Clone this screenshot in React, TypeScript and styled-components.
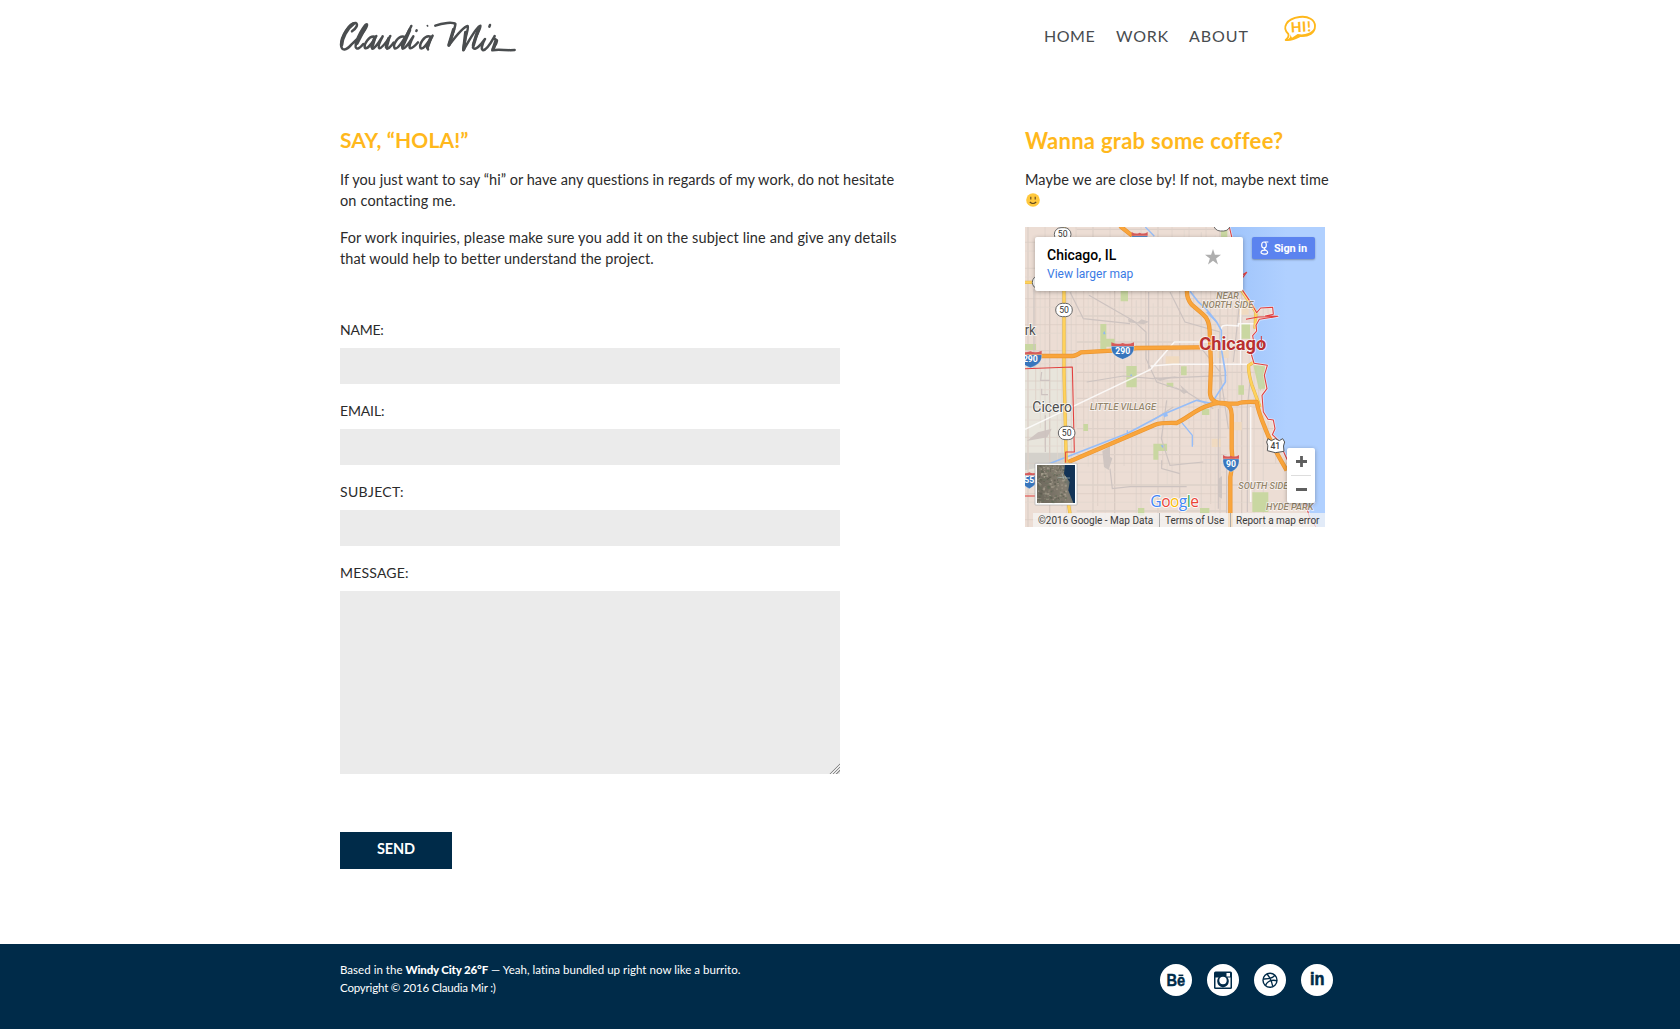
import React from "react";
import styled, { createGlobalStyle } from "styled-components";

const navy = "#002b49";
const amber = "#ffb81c";

const GlobalStyle = createGlobalStyle`
  * { box-sizing: border-box; }
  body { margin: 0; background: #fff; color: #2b2b2b; font-family: Lato, "Open Sans", sans-serif; }
  h2, p { margin: 0; }
`;

const Page = styled.div`
  display: flex;
  flex-direction: column;
  height: 1029px;
  overflow: hidden;
`;

const Container = styled.div`
  display: flex;
  justify-content: space-between;
  width: 1000px;
  margin: 0 auto;
`;

const Header = styled.header`
  height: 126px;
`;

const HeaderRow = styled(Container)`
  height: 70px;
`;

const Logo = styled.svg`
  display: block;
  width: 200px;
  height: 50px;
  margin: 10px 0 0 -10px;
  fill: none;
  stroke: #4a4d4f;
  stroke-linecap: round;
  stroke-linejoin: round;
`;

const Nav = styled.nav`
  display: flex;
  align-items: flex-start;
  padding-right: 22px;
`;

const NavLink = styled.a<{ $track: number; $width: number }>`
  width: ${(p) => p.$width}px;
  padding-top: 25px;
  font-size: 16px;
  line-height: 22px;
  letter-spacing: ${(p) => p.$track}px;
  color: #484c4f;
  text-decoration: none;
  white-space: nowrap;
`;

const HiBubble = styled.svg`
  width: 36px;
  height: 32px;
  margin: 13px 0 0 20px;
`;

const Main = styled(Container)`
  flex: 1;
  align-items: flex-start;
`;

const Column = styled.section<{ $width: number }>`
  display: flex;
  flex-direction: column;
  width: ${(p) => p.$width}px;
`;

const Heading = styled.h2<{ $track: number; $size: number }>`
  height: 27px;
  font-size: ${(p) => p.$size}px;
  line-height: ${(p) => (p.$size > 21 ? 29 : 27)}px;
  font-weight: 700;
  letter-spacing: ${(p) => p.$track}px;
  color: ${amber};
  white-space: nowrap;
`;

const Paragraph = styled.p`
  display: flex;
  flex-direction: column;
  margin-top: 16px;
  font-size: 14.5px;
  line-height: 21px;
`;

const Line = styled.span<{ $track: number }>`
  letter-spacing: ${(p) => p.$track}px;
  white-space: nowrap;
`;

const Smiley = styled.svg`
  width: 14px;
  height: 14px;
  margin: 3px 0 4px 1px;
`;

const Form = styled.form`
  display: flex;
  flex-direction: column;
  align-items: flex-start;
  margin-top: 51px;
`;

const Field = styled.label`
  display: flex;
  flex-direction: column;
  width: 500px;
  margin-bottom: 17px;
`;

const FieldName = styled.span<{ $track: number }>`
  height: 28px;
  font-size: 14px;
  line-height: 20px;
  letter-spacing: ${(p) => p.$track}px;
`;

const Input = styled.input`
  height: 36px;
  border: 0;
  padding: 0 10px;
  background: #ebebeb;
`;

const TextArea = styled.textarea`
  height: 183px;
  border: 0;
  padding: 10px;
  background: #ebebeb;
  resize: both;

  &::-webkit-resizer {
    background: linear-gradient(
      135deg,
      transparent 13.4px,
      #8a8a8a 13.7px,
      #8a8a8a 14.3px,
      transparent 14.7px,
      transparent 15.7px,
      #8a8a8a 16px,
      #8a8a8a 16.6px,
      transparent 17px,
      transparent 18px,
      #8a8a8a 18.3px,
      #8a8a8a 18.9px,
      transparent 19.3px
    );
  }
`;

const SendButton = styled.button`
  width: 112px;
  height: 37px;
  margin-top: 41px;
  padding: 0 0 3px;
  border: 0;
  background: ${navy};
  color: #fff;
  font: 700 14.5px/20px Lato, sans-serif;
  letter-spacing: -0.15px;
`;

const MapFrame = styled.div`
  position: relative;
  width: 300px;
  height: 300px;
  margin-top: 16px;
  overflow: hidden;
  font-family: Roboto, sans-serif;
`;

const MapCanvas = styled.svg`
  display: block;
  width: 300px;
  height: 300px;
`;

const PlaceCard = styled.div`
  position: absolute;
  left: 10px;
  top: 10px;
  display: flex;
  justify-content: space-between;
  width: 208px;
  height: 54px;
  padding: 9px 22px 0 12px;
  border-radius: 2px;
  background: #fff;
  box-shadow: 0 1px 4px rgba(0, 0, 0, 0.3);
`;

const PlaceText = styled.div`
  display: flex;
  flex-direction: column;
`;

const PlaceName = styled.span`
  font-size: 14px;
  line-height: 19px;
  font-weight: 500;
  color: #000;
`;

const PlaceLink = styled.a`
  font-size: 12px;
  line-height: 18px;
  color: #3a7ae4;
`;

const Star = styled.svg`
  width: 16px;
  height: 16px;
  margin-top: 3px;
  fill: #aeaeae;
`;

const SignIn = styled.div`
  position: absolute;
  right: 10px;
  top: 10px;
  display: flex;
  align-items: center;
  gap: 5px;
  width: 63px;
  height: 22px;
  padding-left: 8px;
  border-radius: 2px;
  background: #5b83ef;
  box-shadow: 0 1px 2px rgba(0, 0, 0, 0.3);
  color: #fff;
  font-size: 11px;
  font-weight: 700;
  letter-spacing: -0.15px;
  white-space: nowrap;
`;

const GoogleG = styled.svg`
  width: 9px;
  height: 14px;
  fill: none;
  stroke: #fff;
`;

const ZoomControl = styled.div`
  position: absolute;
  right: 10px;
  top: 221px;
  width: 28px;
  height: 55px;
  border-radius: 2px;
  background: #fff;
  box-shadow: 0 1px 4px rgba(0, 0, 0, 0.3);
`;

const Attribution = styled.div`
  position: absolute;
  right: 0;
  bottom: 0;
  display: flex;
  width: 292px;
  height: 14px;
  background: rgba(245, 245, 245, 0.72);
  color: #3a3a3a;
  font-size: 10px;
  line-height: 15px;
  white-space: nowrap;
`;

const Credit = styled.span<{ $width: number }>`
  width: ${(p) => p.$width}px;
  padding-left: 5px;
  & + & {
    border-left: 1px solid #aaa;
  }
`;

const Footer = styled.footer`
  height: 85px;
  background: ${navy};
  color: #fff;
`;

const FooterText = styled.div`
  display: flex;
  flex-direction: column;
  padding-top: 17px;
  font-size: 11.5px;
  line-height: 18px;
`;

const Bold = styled.b`
  font-weight: 900;
  letter-spacing: -0.15px;
`;

const Social = styled.div`
  display: flex;
  gap: 15px;
  padding: 20px 7px 0 0;
`;

const SocialIcon = styled.svg`
  width: 32px;
  height: 32px;
`;

const Signature = () => (
  <Logo viewBox="0 0 600 150" aria-label="Claudia Mir">
    <g strokeWidth="7.5">
      <path d="M66 64 C78 56 86 43 77 39 C58 37 33 80 33 104 C34 125 50 121 64 104 C84 86 114 54 111 43 C106 38 74 92 77 111 C80 122 92 112 100 102" />
      <path d="M134 80 C118 76 100 103 105 114 C113 120 129 94 139 78 C130 94 121 111 127 116 C136 116 150 91 158 79 C149 96 142 111 148 115 C158 114 171 93 181 78 C171 96 164 112 171 116 C181 114 186 103 191 98" />
      <path d="M222 80 C204 76 187 105 194 115 C204 120 230 77 244 48 C230 76 211 108 218 116 C228 116 241 93 250 79 C241 96 235 112 241 115 C250 114 258 104 264 97" />
      <path d="M302 80 C283 73 266 104 272 115 C281 121 297 92 308 77 C298 95 289 110 294 118" />
      <path d="M260 61 L259 63" />
      <path d="M292 47 L293 48" strokeWidth="5" />
      <path d="M316 47 C338 38 370 36 376 42 C377 51 365 77 356 107 C374 83 400 50 413 48 C418 55 402 86 400 121 C416 94 440 48 451 47 C456 53 428 89 429 113 C435 124 452 105 465 87 C456 103 452 119 459 121 C472 119 484 96 494 78 C488 90 500 86 501 92 C500 104 490 112 487 121 C503 117 530 122 554 120" />
      <path d="M480 45 L478 50" />
    </g>
    <g strokeWidth="10">
      <path d="M70 42 C50 56 36 84 35 105 M105 53 L81 100 M371 58 L357 104 M407 67 L401 118 M444 60 L430 106 M498 92 L489 118 M134 84 L126 111 M176 86 L169 111 M239 60 L218 108 M302 84 L292 112" />
    </g>
  </Logo>
);

const Bubble = () => (
  <HiBubble viewBox="0 0 108 96">
    <path
      d="M52 12 C79 8 99 21 99 39 C99 61 80 70 55 69 C42 76 28 84 11 81 C18 75 21 69 19 63 C-1 44 13 17 52 12Z"
      fill="#fff"
      stroke={amber}
      strokeWidth="5.5"
      strokeLinejoin="round"
    />
    <path d="M24 64 C27 73 22 77 12 82 C32 81 46 71 57 71 C76 71 94 62 98 46 C83 64 64 66 47 63 L30 74 Z" fill={amber} />
    <text x="26" y="57" fontFamily="Lato" fontSize="42" fontWeight="900" fill={amber} letterSpacing="2" transform="rotate(-3 50 45)">
      HI!
    </text>
  </HiBubble>
);

const shades = ["#ddd0c8", "#d9cbc3", "#e2d6ce"];
const gridX = Array.from({ length: 47 }, (_, i) => 24 + i * 16 + ((i * 7) % 9));
const gridY = Array.from({ length: 33 }, (_, i) => 22 + i * 28 + ((i * 11) % 13));
const noise = (n: number) => Math.abs(Math.sin(n * 127.1 + 3.7) * 43758.5453) % 1;

const Interstate = ({ x, y, label }: { x: number; y: number; label: string }) => {
  const half = label.length > 2 ? 34 : 24;
  return (
    <g transform={`translate(${x} ${y})`}>
      <path
        d={`M${-half} -12 H${half} C${half + 2} 10 ${half * 0.6} 20 0 27 C${-half * 0.6} 20 ${-half - 2} 10 ${-half} -12Z`}
        fill="#3876bd"
        stroke="#fff"
        strokeWidth="1"
      />
      <path d={`M${-half} -24 Q${-half / 2} -16 0 -22 Q${half / 2} -16 ${half} -24 V-13 H${-half}Z`} fill="#d65b5b" />
      <text y="11" textAnchor="middle" fontSize="26" fontWeight="700" fill="#fff">
        {label}
      </text>
    </g>
  );
};

const Route = ({ x, y, label }: { x: number; y: number; label: string }) => (
  <g>
    <rect x={x - 25} y={y - 20} width="50" height="40" rx="20" fill="#fff" stroke="#666" strokeWidth="3" />
    <text x={x} y={y + 9} textAnchor="middle" fontSize="26" fill="#333">
      {label}
    </text>
  </g>
);

const shore =
  "M628 15 L634 40 L655 130 L664 200 L690 238 L710 272 L722 258 L758 256 L760 277 L736 282 L774 283 L718 292 L708 310 L710 327 L698 341 L702 366 L692 390 L702 424 L742 430 L733 460 L741 500 L726 520 L730 570 L744 592 L760 594 L765 620 L757 638 L775 655 L802 714 L850 822 L868 884 L888 915";

const expressways =
  "M15 402 H157 Q166 402 183 391 L290 385 L350 378 L540 376 M300 12 L340 44 M501 205 Q499 229 515 248 L550 278 Q568 292 569 327 L573 430 L570 510 Q569 543 612 545 Q635 548 635 578 V680 L638 720 L631 765 V915 M145 720 L409 607 Q420 602 470 603 C500 590 530 560 565 551 Q590 538 625 545 H653 Q665 538 710 540 Q715 570 736 620 Q755 670 800 745";

const highways = "M132 15 V450 L138 690 L140 810 L150 875 M15 181 H50 M665 205 L708 270 L705 320 M703 420 L686 430 Q684 450 696 490 L720 555";

const ChicagoMap = () => (
  <MapCanvas viewBox="15 15 900 900" fontFamily="Roboto, sans-serif">
    <defs>
      <linearGradient id="lake" x1="0" x2="1">
        <stop offset="0" stopColor="#9fc4fb" />
        <stop offset="0.6" stopColor="#b0d0ff" />
      </linearGradient>
      <linearGradient id="sat" x1="0" x2="1" y1="0.3" y2="0">
        <stop offset="0" stopColor="#6f6a5e" />
        <stop offset="0.6" stopColor="#857e71" />
        <stop offset="0.8" stopColor="#5a6a69" />
        <stop offset="0.95" stopColor="#0d3260" />
      </linearGradient>
    </defs>
    <rect x="15" y="15" width="900" height="900" fill="#ecddd4" />
    <path d="M15 437 H158 L163 690 H137 L134 722 L15 780Z" fill="#e8e5dc" />
    <path d="M15 692 H134 V720 L15 745Z" fill="#d4d1cb" />
    {gridX.map((x, i) => (
      <path key={x} d={`M${x} ${i % 3 === 0 ? 15 : 15 + ((i * 83) % 240)} V${i % 4 === 0 ? 915 : 500 + ((i * 59) % 415)}`} stroke={shades[i % 3]} strokeWidth={i % 4 ? 2 : 4} />
    ))}
    {gridY.map((y, i) => (
      <path key={y} d={`M${i % 3 ? 15 : 170} ${y} H${i % 2 ? 860 : 620}`} stroke={shades[i % 3]} strokeWidth={i % 3 ? 2 : 4} />
    ))}
    <path
      d="M302 207 H324 V238 H302Z M241 306 H259 V350 H284 V374 H259 V381 H241Z M319 432 H350 V496 H319Z M483 433 H500 V460 H483Z M15 366 H48 V384 H15Z M190 606 H204 V627 H190Z M400 665 H441 V687 H415 V713 H400Z M655 490 H672 V518 H655Z M546 561 H568 V579 H546Z M697 811 H745 V870 H697Z M354 858 H373 V881 H354Z M540 858 H568 V874 H540Z M603 18 H622 V48 H603Z M440 482 H460 V495 H440Z M664 306 H690 V350 H664Z M700 430 H735 V500 H716Z"
      fill="#c9d7a1"
    />
    <path d="M250 332 L253 327 L257 337 H250Z M422 670 H434 L428 678Z M330 460 L334 456 L337 464Z" fill="#8db7f2" />
    <path d="M437 403 H478 V425 H437Z M593 381 H626 V408 H593Z M654 249 H686 V278 H654Z M640 600 H665 V625 H640Z M575 650 H602 V675 H575Z" fill="#f0dac0" />
    <path
      d="M324 290 L353 301 L365 292 L387 299 L371 307 L326 301Z M247 687 L270 673 V704 L277 709 L266 744 L252 735Z M400 466 L424 467 L475 462 L420 477Z M461 492 L489 507 L480 488 L504 509 L492 516Z M20 657 L54 631 L95 620 L82 646Z M594 772 L606 762 V830 L594 823Z"
      fill="#cfc5c1"
    />
    <g fill="none" stroke="#cdc3c0" strokeWidth="3.5">
      <path d="M150 210 L190 290 L330 305 M207 220 L340 296 L378 330 V410 L410 480 L500 510 L580 560 M450 210 L495 300 L600 330 V540 M200 480 L310 462 L400 470 L620 460 M270 740 L277 800 L330 794 H500 M440 535 L424 650 L450 730 L550 720 M690 480 L682 555 V870 M595 560 V860 M386 210 V440 M545 380 L600 450 L625 620 M660 230 L640 420 M42 200 V440 M76 580 V690 M620 720 V875 M425 715 V740 L480 755 M460 555 L390 600" />
      <path d="M65 450 L62 475 L90 475 M65 500 V518 H84" />
    </g>
    <path d="M15 622 L392 442 L463 360 H690 M392 432 L460 427 H694 M604 375 V318 Q606 308 624 310 L655 312 V305 H707 M662 230 V425 M692 555 V840" fill="none" stroke="#fff" strokeOpacity="0.8" strokeWidth="4.5" />
    <g fill="none" stroke="#96bdf8" strokeLinejoin="round">
      <path d="M510 208 L535 240 L558 260 L590 300 L604 325 V380 L616 450 V480 L590 520 L575 545 L530 535 L430 577 L323 634 L80 728" strokeWidth="5" />
      <path d="M376 15 L403 43 M480 595 L517 640 V674 M322 625 V640 M590 300 L560 270" strokeWidth="4" />
      <path d="M430 580 L442 576" strokeWidth="12" />
    </g>
    <path d={shore + " H915 V15Z"} fill="url(#lake)" />
    <path d="M709 433 L720 508 L730 490 L726 438Z" fill="#c7d8a9" />
    <g fill="none" strokeLinejoin="round">
      <path d={highways} stroke="#e2b54b" strokeWidth="10" />
      <path d={highways} stroke="#ffd25c" strokeWidth="7" />
      <path d={expressways} stroke="#eb9530" strokeWidth="13" />
      <path d={expressways} stroke="#f9a53c" strokeWidth="9" />
    </g>
    <g fill="none" stroke="#e2403f" strokeWidth="3.2" strokeLinejoin="round">
      <path d={shore} stroke="#fff" strokeOpacity="0.5" strokeWidth="8" />
      <path d={shore} />
      <path d="M668 158 L680 151 L668 167 M678 292 L715 285 L758 284 M15 440 L157 435 L163 690 H137 V722 M15 822 H52" />
    </g>
    <Route x={128} y={37} label="50" />
    <Route x={132} y={264} label="50" />
    <Route x={140} y={633} label="50" />
    <Route x={606} y={7} label="" />
    <Route x={62} y={181} label="" />
    <Interstate x={31} y={410} label="290" />
    <Interstate x={308} y={385} label="290" />
    <Interstate x={359} y={54} label="" />
    <Interstate x={28} y={773} label="55" />
    <Interstate x={633} y={723} label="90" />
    <path d="M744 650 L754 656 L766 650 L778 656 L788 650 L794 660 Q788 670 792 688 L766 692 L742 686 Q746 670 740 660Z" fill="#fff" stroke="#555" strokeWidth="3" />
    <text x="766" y="680" fontSize="26" fontWeight="500" textAnchor="middle" fill="#444">
      41
    </text>
    <g fill="#4e4e4e" stroke="#fff" strokeOpacity="0.8" strokeWidth="5" paintOrder="stroke" fontSize="42">
      <text x="14" y="338" textLength="33" lengthAdjust="spacingAndGlyphs">
        rk
      </text>
      <text x="37" y="570" textLength="119" lengthAdjust="spacingAndGlyphs">
        Cicero
      </text>
    </g>
    <g fill="#94856b" stroke="#fff" strokeOpacity="0.7" strokeWidth="4" paintOrder="stroke" fontSize="28" fontStyle="italic" fontWeight="500">
      <text x="589" y="230" textLength="67" lengthAdjust="spacingAndGlyphs">
        NEAR
      </text>
      <text x="546" y="257" textLength="154" lengthAdjust="spacingAndGlyphs">
        NORTH SIDE
      </text>
      <text x="210" y="563" textLength="198" lengthAdjust="spacingAndGlyphs">
        LITTLE VILLAGE
      </text>
      <text x="655" y="800" textLength="150" lengthAdjust="spacingAndGlyphs">
        SOUTH SIDE
      </text>
      <text x="738" y="864" textLength="142" lengthAdjust="spacingAndGlyphs">
        HYDE PARK
      </text>
    </g>
    <text x="538" y="384" textLength="201" lengthAdjust="spacingAndGlyphs" fontSize="56" fontWeight="700" fill="#b93030" stroke="#fff" strokeOpacity="0.7" strokeWidth="5" paintOrder="stroke">
      Chicago
    </text>
    <path d="M724 342 V374" stroke="#d63c3c" strokeWidth="3" />
    <rect x="45" y="724" width="126" height="125" rx="2" fill="#fff" stroke="#aaa" strokeWidth="2" />
    <rect x="51" y="729" width="114" height="114" fill="url(#sat)" />
    {Array.from({ length: 260 }, (_, i) => (
      <rect
        key={i}
        x={51 + noise(i) * 86}
        y={729 + noise(i + 400) * 110}
        width={2 + noise(i + 800) * 6}
        height={2 + noise(i + 1200) * 4}
        fill={["#b0a898", "#55564a", "#8a8375", "#66705c"][i % 4]}
        fillOpacity="0.6"
      />
    ))}
    <path d="M135 729 H165 V843 H160 L145 805 L149 780 L132 755Z" fill="#123356" />
    <path d="M112 768 L138 764 M126 755 L132 772 M134 768 L150 768" stroke="#aebbb5" strokeOpacity="0.7" strokeWidth="3" />
    <text x="391" y="854" textLength="146" fontFamily="'Open Sans'" fontSize="47" fontWeight="500" stroke="#fff" strokeWidth="5" paintOrder="stroke">
      <tspan fill="#4285f4">G</tspan>
      <tspan fill="#ea4335">o</tspan>
      <tspan fill="#fbbc05">o</tspan>
      <tspan fill="#4285f4">g</tspan>
      <tspan fill="#34a853">l</tspan>
      <tspan fill="#ea4335">e</tspan>
    </text>
  </MapCanvas>
);

const MapWidget = () => (
  <MapFrame>
    <ChicagoMap />
    <PlaceCard>
      <PlaceText>
        <PlaceName>Chicago, IL</PlaceName>
        <PlaceLink>View larger map</PlaceLink>
      </PlaceText>
      <Star viewBox="0 0 16 16">
        <path d="M8 0 L9.9 5.8 H16 L11.1 9.4 L13 15.4 L8 11.7 L3 15.4 L4.9 9.4 L0 5.8 H6.1Z" />
      </Star>
    </PlaceCard>
    <SignIn>
      <GoogleG viewBox="0 0 27 42">
        <ellipse cx="12" cy="12" rx="7" ry="9" strokeWidth="3.5" />
        <path d="M14 3 H25 M15 20 C6 27 24 26 23 34 C22 42 2 41 3 33 C4 28 12 27 17 28" strokeWidth="3.5" />
      </GoogleG>
      Sign in
    </SignIn>
    <ZoomControl>
      <svg width="28" height="55" viewBox="0 0 28 55">
        <path d="M9 13.5 H20 M14.5 8 V19 M9 41.5 H20" stroke="#5e5e5e" strokeWidth="2.8" />
        <path d="M4 27.5 H24" stroke="#ddd" />
      </svg>
    </ZoomControl>
    <Attribution>
      <Credit $width={126}>©2016 Google - Map Data</Credit>
      <Credit $width={71}>Terms of Use</Credit>
      <Credit $width={95}>Report a map error</Credit>
    </Attribution>
  </MapFrame>
);

const BehanceIcon = () => (
  <SocialIcon viewBox="0 0 32 32">
    <circle cx="16" cy="16" r="16" fill="#fff" />
    <text x="6.5" y="21.8" fontFamily="Liberation Sans" fontSize="16" fontWeight="700" fill={navy} stroke={navy} strokeWidth="0.4" textLength="18.7" lengthAdjust="spacingAndGlyphs">
      Be
    </text>
    <path d="M18.5 11.3 H23.3" stroke={navy} strokeWidth="1.5" />
  </SocialIcon>
);

const InstagramIcon = () => (
  <SocialIcon viewBox="0 0 32 32">
    <circle cx="16" cy="16" r="16" fill="#fff" />
    <rect x="7" y="7.5" width="18" height="17.5" rx="1.5" fill={navy} />
    <path d="M8.5 13.5 H12 M20 13.5 H23.5 V23.5 H8.5 V13.5 H12 A5.7 5.7 0 1 0 20 13.5Z" fill="#fff" />
    <circle cx="16" cy="16.5" r="4.6" fill="#fff" stroke={navy} strokeWidth="1.8" />
    <rect x="19.5" y="9" width="3.5" height="3.5" fill="#fff" />
  </SocialIcon>
);

const DribbbleIcon = () => (
  <SocialIcon viewBox="0 0 32 32">
    <circle cx="16" cy="16" r="16" fill="#fff" />
    <g fill="none" stroke={navy} strokeWidth="1.4">
      <circle cx="16" cy="16.3" r="7" />
      <path d="M9.2 15 C15 15.2 19 13.5 21 11.2 M13 10 C16 13.5 18 18 18.8 22.5 M11.5 21.5 C13.5 17 17.5 15.5 23 16.7" />
    </g>
  </SocialIcon>
);

const LinkedInIcon = () => (
  <SocialIcon viewBox="0 0 32 32">
    <circle cx="16" cy="16" r="16" fill="#fff" />
    <text x="9" y="21" fontFamily="Liberation Sans" fontSize="18.5" fontWeight="700" fill={navy} stroke={navy} strokeWidth="0.6" textLength="14.5" lengthAdjust="spacingAndGlyphs">
      in
    </text>
  </SocialIcon>
);

const App = () => (
  <Page>
    <GlobalStyle />
    <Header>
      <HeaderRow>
        <Signature />
        <Nav>
          <NavLink $track={0.5} $width={72}>HOME</NavLink>
          <NavLink $track={0.75} $width={73}>WORK</NavLink>
          <NavLink $track={0.95} $width={73}>ABOUT</NavLink>
          <Bubble />
        </Nav>
      </HeaderRow>
    </Header>
    <Main>
      <Column $width={560}>
        <Heading $size={21} $track={0.12}>SAY, “HOLA!”</Heading>
        <Paragraph>
          <Line $track={0.052}>If you just want to say “hi” or have any questions in regards of my work, do not hesitate</Line>
          <Line $track={0.14}>on contacting me.</Line>
        </Paragraph>
        <Paragraph>
          <Line $track={0.14}>For work inquiries, please make sure you add it on the subject line and give any details</Line>
          <Line $track={0.06}>that would help to better understand the project.</Line>
        </Paragraph>
        <Form>
          <Field>
            <FieldName $track={-0.25}>NAME:</FieldName>
            <Input />
          </Field>
          <Field>
            <FieldName $track={-0.15}>EMAIL:</FieldName>
            <Input />
          </Field>
          <Field>
            <FieldName $track={0.35}>SUBJECT:</FieldName>
            <Input />
          </Field>
          <Field>
            <FieldName $track={0.2}>MESSAGE:</FieldName>
            <TextArea />
          </Field>
          <SendButton type="button">SEND</SendButton>
        </Form>
      </Column>
      <Column $width={315}>
        <Heading $size={22} $track={0.28}>Wanna grab some coffee?</Heading>
        <Paragraph>
          <Line $track={0.1}>Maybe we are close by! If not, maybe next time</Line>
          <Smiley viewBox="0 0 14 14">
            <circle cx="7" cy="7" r="6.8" fill="#ffc83d" />
            <path d="M4.8 3.8 V6.4 M9.2 3.8 V6.4 M3.8 9 Q7 12 10.2 9" fill="none" stroke="#5d4520" strokeWidth="1.1" />
          </Smiley>
        </Paragraph>
        <MapWidget />
      </Column>
    </Main>
    <Footer>
      <Container>
        <FooterText>
          <Line $track={0.025}>
            Based in the <Bold>Windy City 26°F</Bold> — Yeah, latina bundled up right now like a burrito.
          </Line>
          <Line $track={-0.18}>Copyright © 2016 Claudia Mir :)</Line>
        </FooterText>
        <Social>
          <BehanceIcon />
          <InstagramIcon />
          <DribbbleIcon />
          <LinkedInIcon />
        </Social>
      </Container>
    </Footer>
  </Page>
);

export default App;
